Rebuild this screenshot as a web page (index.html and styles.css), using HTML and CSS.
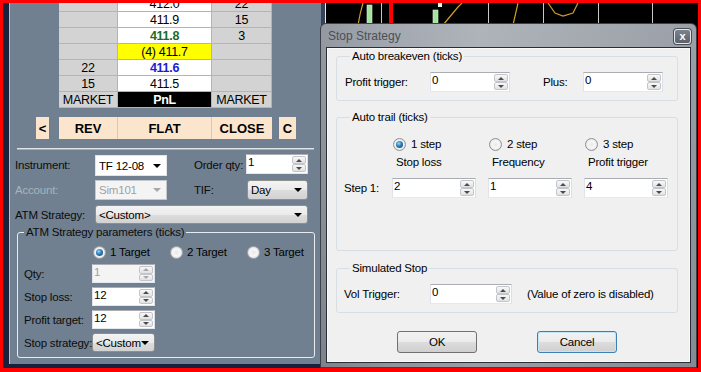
FILE: index.html
```html
<!DOCTYPE html>
<html lang="en">
<head>
    <meta charset="UTF-8">
    <meta name="viewport" content="width=device-width, initial-scale=1.0">
    <title>Stop Strategy</title>
    <link rel="stylesheet" href="styles.css">
</head>
<body>
    <div class="screen">
        <div class="dom">
            <div class="ladder">
                <div class="cell"></div><div class="cell price">412.0</div><div class="cell">22</div>
                <div class="cell"></div><div class="cell price">411.9</div><div class="cell">15</div>
                <div class="cell"></div><div class="cell price ask">411.8</div><div class="cell">3</div>
                <div class="cell"></div><div class="cell price last">(4) 411.7</div><div class="cell"></div>
                <div class="cell">22</div><div class="cell price bid">411.6</div><div class="cell"></div>
                <div class="cell">15</div><div class="cell price">411.5</div><div class="cell"></div>
                <div class="cell">MARKET</div><div class="cell pnl">PnL</div><div class="cell">MARKET</div>
            </div>

            <div class="actions">
                <button class="act act-prev">&lt;</button>
                <button class="act act-rev">REV</button>
                <button class="act act-flat">FLAT</button>
                <button class="act act-close">CLOSE</button>
                <button class="act act-c">C</button>
            </div>

            <div class="sep"></div>

            <div class="order-form">
                <div class="frow r1">
                    <span class="flabel">Instrument:</span>
                    <div class="combo plain w-inst"><span>TF 12-08</span><i class="caret"></i></div>
                    <span class="flabel2">Order qty:</span>
                    <div class="spin w-qty"><span class="val">1</span><span class="arrows"><b class="up"></b><b class="down"></b></span></div>
                </div>
                <div class="frow r2">
                    <span class="flabel disabled">Account:</span>
                    <div class="combo off w-inst"><span>Sim101</span><i class="caret"></i></div>
                    <span class="flabel2">TIF:</span>
                    <div class="combo w-tif"><span>Day</span><i class="caret"></i></div>
                </div>
                <div class="frow r3">
                    <span class="flabel">ATM Strategy:</span>
                    <div class="combo w-atm"><span>&lt;Custom&gt;</span><i class="caret"></i></div>
                </div>
            </div>

            <fieldset class="atm">
                <legend>ATM Strategy parameters (ticks)</legend>
                <div class="targets">
                    <label class="opt"><i class="radio on"></i>1 Target</label>
                    <label class="opt"><i class="radio"></i>2 Target</label>
                    <label class="opt"><i class="radio"></i>3 Target</label>
                </div>
                <div class="prow">
                    <span class="plabel">Qty:</span>
                    <div class="spin off w-param"><span class="val">1</span><span class="arrows"><b class="up"></b><b class="down"></b></span></div>
                </div>
                <div class="prow">
                    <span class="plabel">Stop loss:</span>
                    <div class="spin w-param"><span class="val">12</span><span class="arrows"><b class="up"></b><b class="down"></b></span></div>
                </div>
                <div class="prow">
                    <span class="plabel">Profit target:</span>
                    <div class="spin w-param"><span class="val">12</span><span class="arrows"><b class="up"></b><b class="down"></b></span></div>
                </div>
                <div class="prow">
                    <span class="plabel">Stop strategy:</span>
                    <div class="combo w-param"><span>&lt;Custom</span><i class="caret"></i></div>
                </div>
            </fieldset>
        </div>

        <div class="chart">
            <svg width="373" height="365">
                <line x1="0.5" y1="0" x2="0.5" y2="365" stroke="#e8e8e8"/>
                <line x1="56.5" y1="0" x2="56.5" y2="365" stroke="#c8c8c8"/>
                <line x1="163.5" y1="0" x2="163.5" y2="365" stroke="#c8c8c8"/>
                <line x1="218.5" y1="0" x2="218.5" y2="365" stroke="#c8c8c8"/>
                <line x1="273.5" y1="0" x2="273.5" y2="365" stroke="#c8c8c8"/>
                <line x1="327.5" y1="0" x2="327.5" y2="365" stroke="#c8c8c8"/>
                <rect x="64" y="0" width="4" height="365" fill="#ff0000"/>
                <rect x="42" y="2" width="5" height="30" fill="#a6e2a0" stroke="#d8f4d4" stroke-width="0.6"/>
                <rect x="108" y="7" width="5" height="25" fill="#a6e2a0" stroke="#d8f4d4" stroke-width="0.6"/>
                <rect x="113" y="0" width="4" height="4" fill="#e8f6e4"/>
                <path d="M38 0 Q35 10 33 22" fill="none" stroke="#d19c2c" stroke-width="1.2"/>
                <path d="M137 0 L133 4 L118 22" fill="none" stroke="#d19c2c" stroke-width="1.2"/>
                <path d="M193 0 L188 22" fill="none" stroke="#d19c2c" stroke-width="1.2"/>
                <path d="M223 0 L230 10 L238 13 L248 10 L253 0" fill="none" stroke="#d19c2c" stroke-width="1.2"/>
            </svg>
        </div>

        <div class="dialog">
            <div class="titlebar">
                <span class="title">Stop Strategy</span>
                <span class="xbtn">x</span>
            </div>
            <div class="client">
                <fieldset class="grp g-be">
                    <legend>Auto breakeven (ticks)</legend>
                    <div class="drow">
                        <span class="dl w-pt">Profit trigger:</span>
                        <div class="spin w-80"><span class="val">0</span><span class="arrows"><b class="up"></b><b class="down"></b></span></div>
                        <span class="dl w-plus">Plus:</span>
                        <div class="spin w-80"><span class="val">0</span><span class="arrows"><b class="up"></b><b class="down"></b></span></div>
                    </div>
                </fieldset>

                <fieldset class="grp g-trail">
                    <legend>Auto trail (ticks)</legend>
                    <div class="trow steps">
                        <span class="lead"></span>
                        <label class="opt"><i class="radio on"></i>1 step</label>
                        <label class="opt"><i class="radio"></i>2 step</label>
                        <label class="opt"><i class="radio"></i>3 step</label>
                    </div>
                    <div class="trow heads">
                        <span class="lead"></span>
                        <span class="col">Stop loss</span>
                        <span class="col">Frequency</span>
                        <span class="col">Profit trigger</span>
                    </div>
                    <div class="trow inputs">
                        <span class="lead dl">Step 1:</span>
                        <div class="spin w-step"><span class="val">2</span><span class="arrows"><b class="up"></b><b class="down"></b></span></div>
                        <div class="spin w-step"><span class="val">1</span><span class="arrows"><b class="up"></b><b class="down"></b></span></div>
                        <div class="spin w-step"><span class="val">4</span><span class="arrows"><b class="up"></b><b class="down"></b></span></div>
                    </div>
                </fieldset>

                <fieldset class="grp g-sim">
                    <legend>Simulated Stop</legend>
                    <div class="drow">
                        <span class="dl w-vol">Vol Trigger:</span>
                        <div class="spin w-82"><span class="val">0</span><span class="arrows"><b class="up"></b><b class="down"></b></span></div>
                        <span class="note">(Value of zero is disabled)</span>
                    </div>
                </fieldset>

                <div class="dbtns">
                    <button class="dbtn">OK</button>
                    <button class="dbtn focus">Cancel</button>
                </div>
            </div>
        </div>
    </div>
</body>
</html>
```

FILE: styles.css
```css
* {
    margin: 0;
    padding: 0;
    box-sizing: border-box;
}

body {
    background: #ff0000;
    font-family: "Liberation Sans", Arial, sans-serif;
    font-size: 11.5px;
    letter-spacing: -0.2px;
    color: #000;
}

button {
    font-family: inherit;
    letter-spacing: inherit;
    cursor: pointer;
}

.screen {
    position: relative;
    width: 701px;
    height: 372px;
    padding: 3px 3px 4px 3px;
    display: flex;
    overflow: hidden;
    background: #ff0000;
}

/* ---------- order panel ---------- */

.dom {
    width: 318px;
    background: #708090;
    border-left: 6px solid #19203c;
    border-bottom: 4px solid #19203c;
    box-shadow: inset 1px 0 0 #b8c2ce;
    overflow: hidden;
}

.ladder {
    display: grid;
    grid-template-columns: 59px 94px 60px;
    grid-auto-rows: 16px;
    width: 213px;
    margin: -7px 0 0 50px;
    font-size: 12.5px;
    letter-spacing: -0.3px;
}

.cell {
    display: flex;
    align-items: center;
    justify-content: center;
    background: #d3d3d3;
    border-right: 1px solid #b4b4b4;
    border-bottom: 1px solid #b4b4b4;
}

.price {
    background: #fff;
}

.ask {
    color: #1f6b1f;
    font-weight: bold;
}

.bid {
    color: #1c1cd2;
    font-weight: bold;
}

.last {
    background: #ffff00;
}

.pnl {
    background: #000;
    color: #fff;
    font-weight: bold;
}

.actions {
    display: flex;
    height: 22px;
    margin: 9px 0 0 27px;
}

.act {
    border: none;
    background: #fce5cd;
    font-size: 13px;
    font-weight: bold;
    letter-spacing: 0;
    color: #000;
}

.act-prev {
    width: 13px;
    margin-right: 10px;
}

.act-rev {
    width: 59px;
    border-right: 1px solid #d8c8b8;
}

.act-flat {
    width: 94px;
    border-right: 1px solid #d8c8b8;
}

.act-close {
    width: 60px;
}

.act-c {
    width: 17px;
    margin-left: 7px;
}

.sep {
    width: 297px;
    margin: 9px 0 0 8px;
    border-top: 1px solid #dfe4e9;
    border-bottom: 1px solid #a3aeba;
}

.order-form {
    margin: 4px 0 0 6px;
}

.frow {
    display: flex;
    align-items: center;
}

.r1 {
    height: 22px;
}

.r2 {
    height: 20px;
    margin-top: 4px;
}

.r3 {
    height: 19px;
    margin-top: 5px;
}

.flabel {
    width: 80px;
    color: #0c0c0c;
}

.flabel.disabled {
    color: #a9b3bd;
}

.flabel2 {
    width: 52px;
    margin-left: 27px;
    color: #0c0c0c;
}

.combo {
    display: flex;
    align-items: center;
    justify-content: space-between;
    height: 100%;
    padding: 0 5px 0 3px;
    border: 1px solid #8e8f8f;
    border-radius: 3px;
    background: linear-gradient(#f3f3f3 0%, #ebebeb 50%, #dddddd 51%, #d2d2d2 100%);
    white-space: nowrap;
    overflow: hidden;
}

.combo.plain {
    background: #fff;
    border: 1px solid #e4e4e4;
    border-radius: 0;
}

.combo.off {
    background: #f4f4f4;
    border: 1px solid #c4c8cc;
    border-radius: 0;
    color: #a0a0a0;
}

.caret {
    flex: none;
    width: 0;
    height: 0;
    border-left: 4px solid transparent;
    border-right: 4px solid transparent;
    border-top: 4px solid #000;
}

.combo.off .caret {
    border-top-color: #a8a8a8;
}

.w-inst {
    width: 72px;
    height: 21px;
    align-self: flex-end;
}

.r2 .w-inst {
    height: 20px;
}

.w-tif {
    width: 61px;
    margin-left: 1px;
}

.w-atm {
    width: 213px;
}

.w-qty {
    width: 62px;
    height: 19px;
    align-self: flex-start;
}

/* spin box shared by panel and dialog */

.spin {
    display: flex;
    height: 20px;
    background: #fff;
    border: 1px solid #abadb3;
    border-color: #abadb3 #dbdfe6 #e3e9ef #e2e3ea;
}

.spin .val {
    flex: 1;
    padding: 1px 0 0 1px;
    line-height: 13px;
}

.spin.off {
    background: #f4f4f4;
    color: #a0a0a0;
}

.arrows {
    width: 15px;
    display: flex;
    flex-direction: column;
    padding: 1px 1px 1px 0;
}

.arrows b {
    flex: 1;
    display: flex;
    align-items: center;
    justify-content: center;
    border: 1px solid #c2c6cc;
    border-radius: 2px;
    background: linear-gradient(#f8f8f8, #e2e2e2);
}

.arrows .up::after {
    content: "";
    border-left: 3px solid transparent;
    border-right: 3px solid transparent;
    border-bottom: 3px solid #4b4b4b;
}

.arrows .down::after {
    content: "";
    border-left: 3px solid transparent;
    border-right: 3px solid transparent;
    border-top: 3px solid #4b4b4b;
}

.spin.off .arrows .up::after {
    border-bottom-color: #a8a8a8;
}

.spin.off .arrows .down::after {
    border-top-color: #a8a8a8;
}

.atm {
    width: 298px;
    min-width: 0;
    margin: 2px 0 0 8px;
    padding: 0 0 5px 0;
    border: 1px solid #e8ecf0;
    border-radius: 3px;
}

.atm legend,
.grp legend {
    margin-left: 6px;
    padding: 0 2px;
    line-height: 13px;
}

.atm legend {
    color: #0c0c0c;
}

.targets {
    display: grid;
    grid-template-columns: 77px 77px 77px;
    height: 14px;
    margin: 6px 0 0 75px;
}

.opt {
    display: flex;
    align-items: center;
    gap: 4px;
    white-space: nowrap;
}

.radio {
    position: relative;
    flex: none;
    width: 13px;
    height: 13px;
    border-radius: 50%;
    border: 1px solid #8f9296;
    background: radial-gradient(circle, #e8e8e8 0, #f7f7f7 45%, #cfcfcf 100%);
}

.radio.on::after {
    content: "";
    position: absolute;
    left: 2px;
    top: 2px;
    width: 7px;
    height: 7px;
    border-radius: 50%;
    background: radial-gradient(circle at 40% 35%, #9ad6fa 0, #2d7cb8 45%, #0d385f 100%);
}

.atm .radio {
    border-color: #a4a8ac;
}

.prow {
    display: flex;
    align-items: center;
    height: 19px;
    margin: 4px 0 0 6px;
}

.targets + .prow {
    margin-top: 5px;
}

.plabel {
    width: 68px;
    color: #0c0c0c;
    white-space: nowrap;
}

.w-param {
    width: 63px;
    height: 19px;
}

/* ---------- chart ---------- */

.chart {
    flex: 1;
    background: #000;
    border-left: 4px solid #36415a;
    overflow: hidden;
}

.chart svg {
    display: block;
}

/* ---------- dialog window ---------- */

.dialog {
    position: absolute;
    left: 320px;
    top: 23px;
    width: 377px;
    height: 345px;
    display: flex;
    flex-direction: column;
    border: 1px solid #3b404a;
    border-radius: 6px 6px 0 0;
    background:
        linear-gradient(rgba(255, 255, 255, 0.12), rgba(0, 0, 0, 0.06)),
        linear-gradient(90deg, #858b95 0%, #979da6 18%, #a4a9b1 42%, #9aa0a8 68%, #8d939c 100%);
}

.titlebar {
    height: 23px;
    flex: none;
    display: flex;
    align-items: center;
    justify-content: space-between;
    padding: 0 5px 0 7px;
}

.title {
    font-size: 12px;
    letter-spacing: 0;
    color: #4a4f57;
}

.xbtn {
    width: 17px;
    height: 15px;
    margin-top: 2px;
    border: 1px solid #e4e6ea;
    border-radius: 3px;
    background: linear-gradient(#7d838d, #5b616b);
    box-shadow: 0 0 0 1px #4a4f58;
    color: #fff;
    font-size: 11px;
    font-weight: bold;
    line-height: 12px;
    text-align: center;
}

.client {
    flex: 1;
    margin: 0 5px 4px 5px;
    padding: 2px 12px 0 9px;
    background: #f0f0f0;
    border: 1px solid #2a2e37;
    box-shadow: inset 0 0 0 1px #fafafa;
}

.grp {
    min-width: 0;
    border: 1px solid #d5dfe5;
    border-radius: 3px;
    padding: 0 0 8px 7px;
}

.g-be .drow {
    padding-left: 1px;
}

.g-trail {
    margin-top: 10px;
    padding-bottom: 52px;
}

.g-sim {
    margin-top: 11px;
}

.drow {
    display: flex;
    align-items: center;
    height: 20px;
    margin-top: 9px;
}

.dl {
    white-space: nowrap;
}

.w-pt {
    width: 85px;
}

.w-plus {
    width: 40px;
    margin-left: 33px;
}

.w-vol {
    width: 86px;
}

.w-80 {
    width: 80px;
}

.w-82 {
    width: 82px;
}

.note {
    margin-left: 15px;
    white-space: nowrap;
}

.trow {
    display: flex;
    align-items: center;
    gap: 12px;
}

.trow .lead {
    width: 36px;
    flex: none;
}

.trow > .opt,
.trow > .col,
.trow > .spin {
    width: 84px;
    flex: none;
}

.steps {
    height: 14px;
    margin-top: 13px;
}

.steps .opt {
    gap: 5px;
    padding-left: 1px;
}

.heads {
    height: 14px;
    margin-top: 4px;
}

.heads .col {
    padding-left: 4px;
    white-space: nowrap;
}

.inputs {
    height: 20px;
    margin-top: 9px;
}

.dbtns {
    display: flex;
    gap: 60px;
    margin: 18px 0 0 61px;
}

.dbtn {
    width: 80px;
    height: 22px;
    border: 1px solid #707070;
    border-radius: 3px;
    background: linear-gradient(#f2f2f2 0%, #ebebeb 50%, #dddddd 51%, #cfcfcf 100%);
    font-size: 11.5px;
    color: #000;
}

.dbtn.focus {
    border-color: #3c7fb1;
    box-shadow: inset 0 0 0 1px #c4e5f6;
}
```
